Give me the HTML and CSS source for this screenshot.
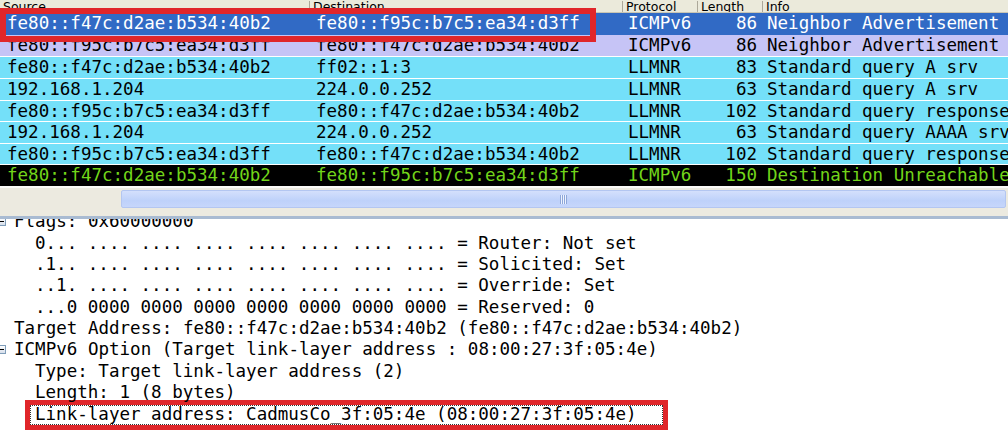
FILE: index.html
```html
<html lang="en">
<head>
  <meta charset="UTF-8">
  <title>Packet capture</title>
  <link rel="stylesheet" href="styles.css">
</head>
<body>
  <!-- Packet List -->
  <div class="packet-list">
    <div class="list-header">
      <span>Source</span>
      <span>Destination</span>
      <span>Protocol</span>
      <span>Length</span>
      <span>Info</span>
    </div>

    <div class="row selected">
      <span class="src">fe80::f47c:d2ae:b534:40b2</span>
      <span class="dst">fe80::f95c:b7c5:ea34:d3ff</span>
      <span class="proto">ICMPv6</span>
      <span class="len">86</span>
      <span class="info">Neighbor Advertisement</span>
    </div>
    <div class="row icmp">
      <span class="src">fe80::f95c:b7c5:ea34:d3ff</span>
      <span class="dst">fe80::f47c:d2ae:b534:40b2</span>
      <span class="proto">ICMPv6</span>
      <span class="len">86</span>
      <span class="info">Neighbor Advertisement</span>
    </div>
    <div class="row udp">
      <span class="src">fe80::f47c:d2ae:b534:40b2</span>
      <span class="dst">ff02::1:3</span>
      <span class="proto">LLMNR</span>
      <span class="len">83</span>
      <span class="info">Standard query A srv</span>
    </div>
    <div class="row udp">
      <span class="src">192.168.1.204</span>
      <span class="dst">224.0.0.252</span>
      <span class="proto">LLMNR</span>
      <span class="len">63</span>
      <span class="info">Standard query A srv</span>
    </div>
    <div class="row udp">
      <span class="src">fe80::f95c:b7c5:ea34:d3ff</span>
      <span class="dst">fe80::f47c:d2ae:b534:40b2</span>
      <span class="proto">LLMNR</span>
      <span class="len">102</span>
      <span class="info">Standard query response A srv</span>
    </div>
    <div class="row udp">
      <span class="src">192.168.1.204</span>
      <span class="dst">224.0.0.252</span>
      <span class="proto">LLMNR</span>
      <span class="len">63</span>
      <span class="info">Standard query AAAA srv</span>
    </div>
    <div class="row udp">
      <span class="src">fe80::f95c:b7c5:ea34:d3ff</span>
      <span class="dst">fe80::f47c:d2ae:b534:40b2</span>
      <span class="proto">LLMNR</span>
      <span class="len">102</span>
      <span class="info">Standard query response AAAA srv</span>
    </div>
    <div class="row error">
      <span class="src">fe80::f47c:d2ae:b534:40b2</span>
      <span class="dst">fe80::f95c:b7c5:ea34:d3ff</span>
      <span class="proto">ICMPv6</span>
      <span class="len">150</span>
      <span class="info">Destination Unreachable (Address unreachable)</span>
    </div>

    <!-- Annotation around the selected packet -->
    <div class="mark"></div>
  </div>

  <!-- Horizontal Scrollbar -->
  <div class="hscroll">
    <div class="thumb"><span class="grip"></span></div>
  </div>

  <!-- Packet Details -->
  <div class="details">
    <div class="tree">
      <div class="line l1"><span class="expander"></span>Flags: 0x60000000</div>
      <div class="line l2">0... .... .... .... .... .... .... .... = Router: Not set</div>
      <div class="line l2">.1.. .... .... .... .... .... .... .... = Solicited: Set</div>
      <div class="line l2">..1. .... .... .... .... .... .... .... = Override: Set</div>
      <div class="line l2">...0 0000 0000 0000 0000 0000 0000 0000 = Reserved: 0</div>
      <div class="line l1">Target Address: fe80::f47c:d2ae:b534:40b2 (fe80::f47c:d2ae:b534:40b2)</div>
      <div class="line l1"><span class="expander"></span>ICMPv6 Option (Target link-layer address : 08:00:27:3f:05:4e)</div>
      <div class="line l2">Type: Target link-layer address (2)</div>
      <div class="line l2">Length: 1 (8 bytes)</div>
      <div class="picked"><div class="focus">Link-layer address: CadmusCo_3f:05:4e (08:00:27:3f:05:4e)</div></div>
    </div>
  </div>
</body>
</html>
```

FILE: styles.css
```css
/* Global Styles */
* {
  box-sizing: border-box;
}
body {
  margin: 0;
  width: 1008px;
  height: 437px;
  overflow: hidden;
  background-color: #ffffff;
  color: #000000;
  font-family: "DejaVu Sans Mono", "Liberation Mono", monospace;
  font-size: 17.55px;
}

/* Packet List */
.packet-list {
  position: relative;
}
.list-header,
.row {
  display: grid;
  grid-template-columns: 309px 313px 75px 65px 1fr;
  white-space: nowrap;
  overflow: hidden;
}
.list-header {
  height: 13px;
  background-color: #ebeadb;
  border-bottom: 1px solid #c9c6b4;
  font-family: "DejaVu Sans", sans-serif;
  font-size: 12.5px;
  line-height: 11px;
  padding-top: 1px;
}
.list-header span {
  padding-left: 3px;
  border-left: 1px solid #aca899;
}
.list-header span:first-child {
  border-left: none;
}

/* Rows */
.row {
  height: 21.625px;
  line-height: 21px;
}
.row .src,
.row .dst {
  padding-left: 7px;
}
.row .proto {
  padding-left: 6px;
}
.row .len {
  text-align: right;
  padding-right: 5px;
}
.row .info {
  padding-left: 5px;
}
.row.selected {
  background-color: #316ac5;
  color: #ffffff;
}
.row.icmp {
  background-color: #c6c4f6;
}
.row.udp {
  background-color: #74e0f9;
  border-top: 1px solid #ffffff;
}
.row.error {
  background-color: #000000;
  color: #72d51a;
  border-top: 1px solid #ffffff;
}

/* Red annotation */
.mark {
  position: absolute;
  left: 0;
  top: 8px;
  width: 596px;
  height: 34px;
  border: 6px solid #e0262a;
}

/* Horizontal Scrollbar */
.hscroll {
  height: 33px;
  background-color: #eceae0;
  border-top: 2px solid #fbfbf8;
  border-bottom: 3px solid #a9bbd2;
  padding: 2px 2px 0 121px;
}
.thumb {
  height: 18px;
  background: linear-gradient(#d4e0fc, #bed1fa 60%, #c6d6fb);
  border: 1px solid #b3c6f1;
  border-radius: 2px;
  display: flex;
  align-items: center;
  justify-content: center;
}
.grip {
  width: 7px;
  height: 9px;
  background: repeating-linear-gradient(90deg, #8ea7d9 0 1px, #eef3fe 1px 2px);
}

/* Packet Details */
.details {
  height: 218px;
  overflow: hidden;
  line-height: 21.33px;
}
.tree {
  margin-top: -7.7px;
}
.line {
  white-space: pre;
}
.line.l1 {
  padding-left: 14px;
}
.line.l2 {
  padding-left: 35px;
}
.expander {
  display: inline-block;
  position: relative;
  width: 9px;
  height: 9px;
  margin-left: -17px;
  margin-right: 8px;
  border: 1px solid #7f9db9;
  background: linear-gradient(#ffffff, #d6deea);
  vertical-align: 1px;
}
.expander::after {
  content: "";
  position: absolute;
  left: 1px;
  top: 3px;
  width: 5px;
  height: 1px;
  background-color: #000000;
}

/* Selected field with red annotation */
.picked {
  width: 643px;
  height: 30px;
  margin: -3px 0 0 25px;
  border: 5px solid #e0262a;
}
.focus {
  height: 20px;
  line-height: 17px;
  padding-left: 4px;
  white-space: nowrap;
  border: 1px dotted #333333;
}
```
